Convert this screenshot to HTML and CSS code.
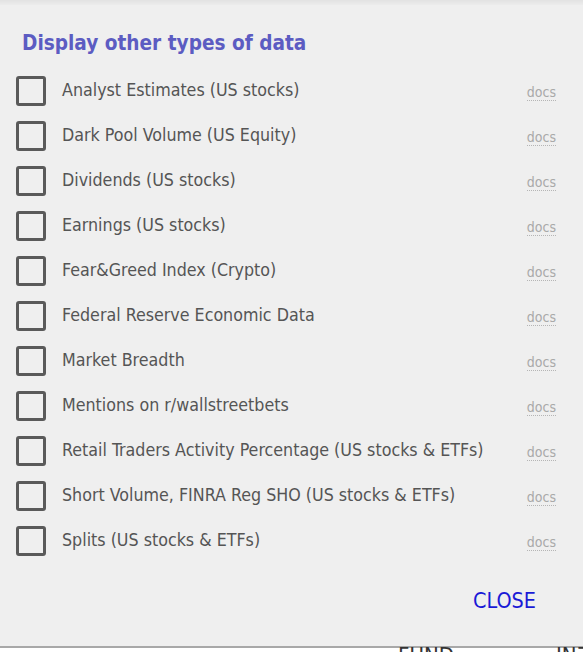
FILE: index.html
```html
<!DOCTYPE html>
<html>
<head>
<meta charset="utf-8">
<link rel="stylesheet" href="styles.css">
</head>
<body>
<div class="dialog">
  <div class="topshade"></div>
  <h2 class="title">Display other types of data</h2>
  <ul class="list">
    <li class="row"><span class="box"></span><span class="label">Analyst Estimates (US stocks)</span><a class="docs">docs</a></li>
    <li class="row"><span class="box"></span><span class="label">Dark Pool Volume (US Equity)</span><a class="docs">docs</a></li>
    <li class="row"><span class="box"></span><span class="label">Dividends (US stocks)</span><a class="docs">docs</a></li>
    <li class="row"><span class="box"></span><span class="label">Earnings (US stocks)</span><a class="docs">docs</a></li>
    <li class="row"><span class="box"></span><span class="label">Fear&amp;Greed Index (Crypto)</span><a class="docs">docs</a></li>
    <li class="row"><span class="box"></span><span class="label">Federal Reserve Economic Data</span><a class="docs">docs</a></li>
    <li class="row"><span class="box"></span><span class="label">Market Breadth</span><a class="docs">docs</a></li>
    <li class="row"><span class="box"></span><span class="label">Mentions on r/wallstreetbets</span><a class="docs">docs</a></li>
    <li class="row"><span class="box"></span><span class="label">Retail Traders Activity Percentage (US stocks &amp; ETFs)</span><a class="docs">docs</a></li>
    <li class="row"><span class="box"></span><span class="label">Short Volume, FINRA Reg SHO (US stocks &amp; ETFs)</span><a class="docs">docs</a></li>
    <li class="row"><span class="box"></span><span class="label">Splits (US stocks &amp; ETFs)</span><a class="docs">docs</a></li>
  </ul>
  <div class="actions"><a class="close">CLOSE</a></div>
</div>
<div class="under">
  <span class="u1">FUND</span><span class="u2">IN7</span>
</div>
</body>
</html>
```

FILE: styles.css
```css
html, body {
  margin: 0;
  padding: 0;
  height: 652px;
  overflow: hidden;
  background: #ffffff;
  font-family: "DejaVu Sans Condensed", "DejaVu Sans", sans-serif;
}
.dialog {
  position: relative;
  height: 646px;
  background: #efefef;
  border-bottom: 2px solid #a8a8a8;
  box-sizing: content-box;
}
.topshade {
  height: 5px;
  background: linear-gradient(#e2e2e2, #ececec);
}
.title {
  margin: 0;
  padding: 26px 0 0 22px;
  font-size: 20.6px;
  line-height: 24px;
  font-weight: bold;
  color: #5c5cc2;
}
.list {
  list-style: none;
  margin: 12px 0 0 0;
  padding: 0 27px 0 16px;
}
.row {
  display: flex;
  align-items: center;
  height: 45px;
}
.box {
  width: 24px;
  height: 24px;
  border: 3px solid #5a5a5a;
  border-radius: 3px;
  flex: none;
  margin-top: 3px;
}
.label {
  margin-left: 16px;
  font-size: 17.7px;
  color: #555555;
  flex: 1;
}
.docs {
  font-size: 14px;
  color: #a9a9a9;
  border-bottom: 1px dotted #b5b5b5;
  line-height: 16px;
  margin-top: 6px;
}
.actions {
  display: flex;
  justify-content: flex-end;
  padding: 27px 47px 0 0;
}
.close {
  font-size: 21.4px;
  color: #1a1ad6;
  line-height: 24px;
}
.under {
  height: 10px;
  position: relative;
  font-size: 22px;
  color: #333;
  line-height: 22px;
}
.u1 { position: absolute; left: 398px; top: -3px; }
.u2 { position: absolute; left: 556px; top: -3px; }
```
